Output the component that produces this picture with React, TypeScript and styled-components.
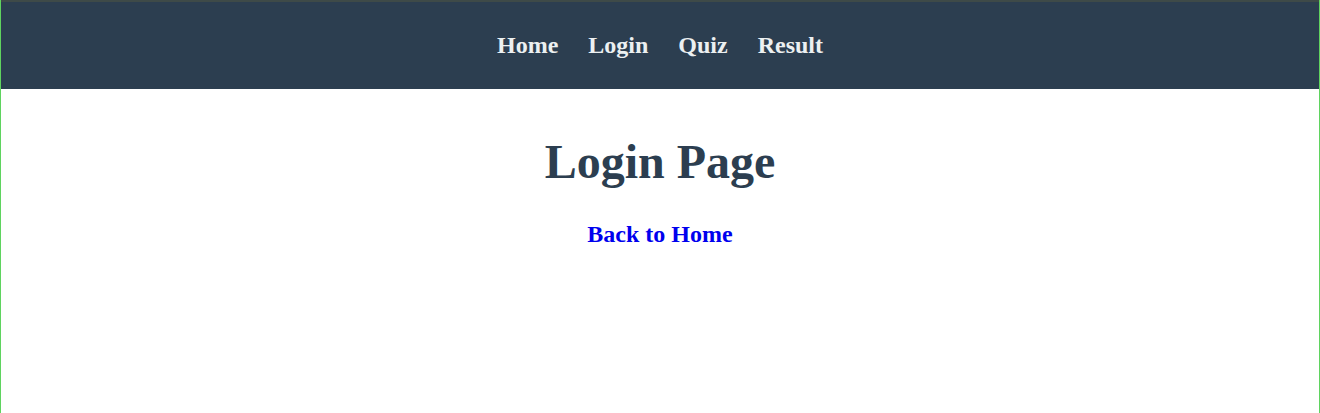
import React from "react";
import styled, { createGlobalStyle } from "styled-components";

const GlobalStyle = createGlobalStyle`
  * { box-sizing: border-box; }
  body { margin: 0; background: #fff; font-family: "Liberation Serif", "Times New Roman", serif; }
`;

const Page = styled.div`
  min-height: 100vh;
  border-left: 1px solid #5fd35f;
  border-right: 1px solid #5fd35f;
`;

const NavBar = styled.nav`
  display: flex;
  justify-content: center;
  gap: 30px;
  padding: 30px 0;
  border-top: 2px solid #3e4a48;
  background: #2c3e50;
`;

const NavLink = styled.a`
  color: #ecf0f1;
  font-size: 24px;
  line-height: 27px;
  font-weight: bold;
  text-decoration: none;
`;

const Content = styled.main`
  display: flex;
  flex-direction: column;
  align-items: center;
  gap: 32px;
  padding-top: 46px;
`;

const Title = styled.h1`
  margin: 0;
  color: #2c3e50;
  font-size: 48px;
  line-height: 54px;
`;

const BackLink = styled.a`
  color: #0000ee;
  font-size: 24px;
  line-height: 27px;
  font-weight: bold;
  text-decoration: none;
`;

const links = ["Home", "Login", "Quiz", "Result"];

export default function App() {
  return (
    <>
      <GlobalStyle />
      <Page>
        <NavBar>
          {links.map((label) => (
            <NavLink key={label} href={`#${label.toLowerCase()}`}>{label}</NavLink>
          ))}
        </NavBar>
        <Content>
          <Title>Login Page</Title>
          <BackLink href="#home">Back to Home</BackLink>
        </Content>
      </Page>
    </>
  );
}
